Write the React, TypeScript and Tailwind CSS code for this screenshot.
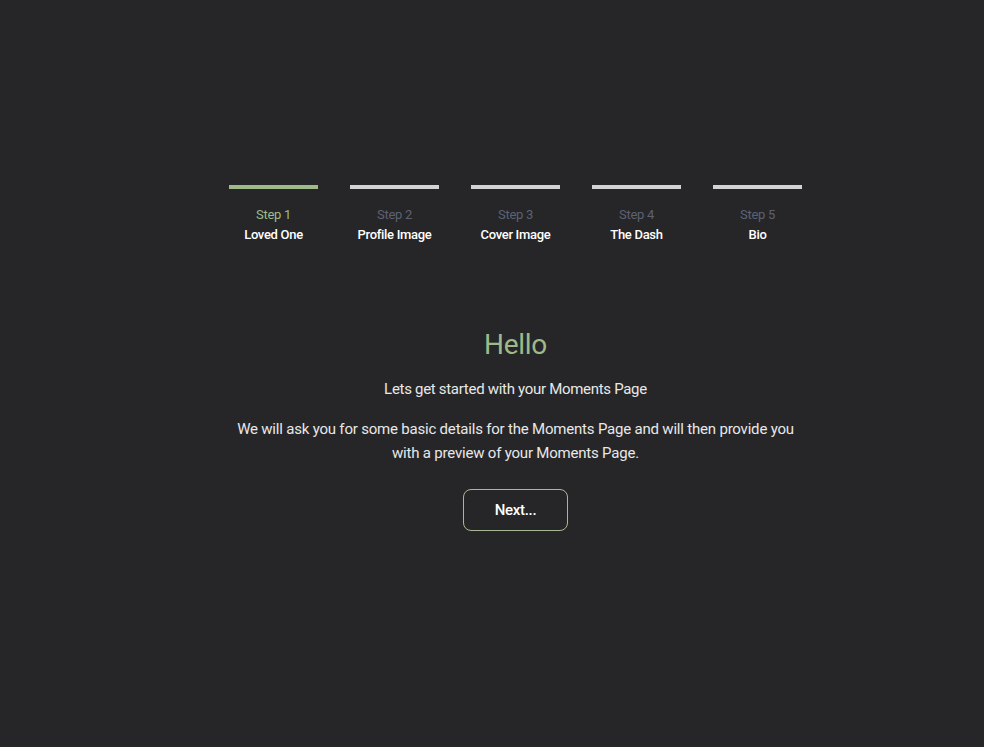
import React from "react";

const steps = [
  { n: "Step 1", label: "Loved One" },
  { n: "Step 2", label: "Profile Image" },
  { n: "Step 3", label: "Cover Image" },
  { n: "Step 4", label: "The Dash" },
  { n: "Step 5", label: "Bio" },
];

export default function App() {
  return (
    <div
      className="min-h-[747px] w-full bg-[#262628] flex flex-col items-center pl-[47px]"
      style={{ fontFamily: "Roboto, 'Noto Sans', sans-serif" }}
    >
      <div className="mt-[185px] flex gap-[32px]">
        {steps.map((s, i) => (
          <div key={s.n} className="w-[89px] flex flex-col items-center">
            <div className={`h-[4px] w-full ${i === 0 ? "bg-[#9fba89]" : "bg-[#d3d3d3]"}`} />
            <div className={`mt-[17px] text-[13px] leading-[18px] tracking-[-0.3px] ${i === 0 ? "text-[#9fba89]" : "text-[#5c6272]"}`}>
              {s.n}
            </div>
            <div className="mt-[2px] text-[13px] leading-[18px] font-medium text-white whitespace-nowrap tracking-[-0.3px]">
              {s.label}
            </div>
          </div>
        ))}
      </div>
      <h1 className="mt-[83px] text-[28px] leading-[36px] text-[#9fba89] tracking-[-0.3px]">Hello</h1>
      <p className="mt-[14px] text-[15px] leading-[24px] text-[#e8e8e8] tracking-[-0.3px]">
        Lets get started with your Moments Page
      </p>
      <p className="mt-[16px] w-[575px] text-center text-[15px] leading-[24px] text-[#e8e8e8] tracking-[-0.2px]">
        We will ask you for some basic details for the Moments Page and will then provide you with a preview of your Moments Page.
      </p>
      <button className="mt-[24px] w-[105px] h-[42px] rounded-[8px] border border-[#a7b897] text-white text-[15px] font-medium tracking-[-0.3px]">
        Next...
      </button>
    </div>
  );
}
